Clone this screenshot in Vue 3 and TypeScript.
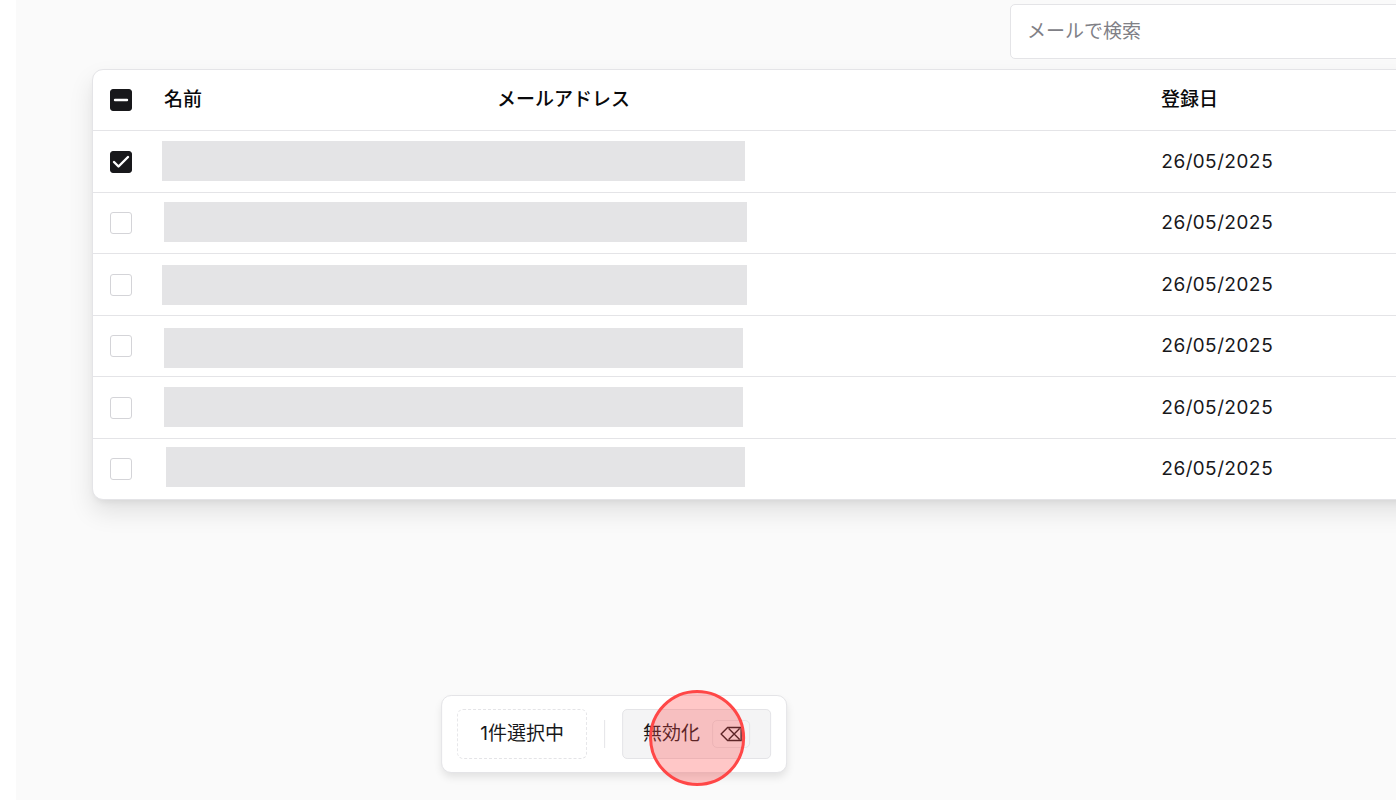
<script setup lang="ts">
import { ref, computed } from 'vue'

interface Mask {
  left: number
  top: number
  width: number
}

interface UserRow {
  id: number
  registered: string
  selected: boolean
  mask: Mask
}

const search = ref('')

const users = ref<UserRow[]>([
  { id: 1, registered: '26/05/2025', selected: true, mask: { left: 14, top: 10, width: 583 } },
  { id: 2, registered: '26/05/2025', selected: false, mask: { left: 16, top: 9, width: 583 } },
  { id: 3, registered: '26/05/2025', selected: false, mask: { left: 14, top: 11, width: 585 } },
  { id: 4, registered: '26/05/2025', selected: false, mask: { left: 16, top: 12, width: 579 } },
  { id: 5, registered: '26/05/2025', selected: false, mask: { left: 16, top: 10, width: 579 } },
  { id: 6, registered: '26/05/2025', selected: false, mask: { left: 18, top: 8, width: 579 } },
])

const selectedCount = computed(() => users.value.filter((u) => u.selected).length)
const allSelected = computed(() => selectedCount.value === users.value.length)
const someSelected = computed(() => selectedCount.value > 0 && !allSelected.value)

function toggleAll() {
  const next = !allSelected.value
  users.value.forEach((u) => (u.selected = next))
}

function maskStyle(mask: Mask) {
  return { left: `${mask.left}px`, top: `${mask.top}px`, width: `${mask.width}px` }
}
</script>

<template>
  <div class="page">
    <main class="content">
      <div class="toolbar">
        <input v-model="search" class="search" type="search" placeholder="メールで検索" aria-label="メールで検索" />
      </div>

      <div class="card">
        <table class="users">
          <colgroup>
            <col class="col-select" />
            <col class="col-name" />
            <col class="col-email" />
            <col class="col-date" />
          </colgroup>
          <thead>
            <tr>
              <th class="select" scope="col">
                <label class="check">
                  <input
                    type="checkbox"
                    aria-label="すべて選択"
                    :checked="allSelected"
                    :indeterminate="someSelected"
                    @change="toggleAll"
                  />
                  <svg v-if="someSelected" viewBox="0 0 22 22" aria-hidden="true">
                    <path d="M5 11h12" />
                  </svg>
                  <svg v-else-if="allSelected" viewBox="0 0 22 22" aria-hidden="true">
                    <path d="M4 11l4.500 4.500L18 6" />
                  </svg>
                </label>
              </th>
              <th scope="col">名前</th>
              <th scope="col">メールアドレス</th>
              <th scope="col">登録日</th>
            </tr>
          </thead>
          <tbody>
            <tr v-for="user in users" :key="user.id">
              <td class="select">
                <label class="check">
                  <input v-model="user.selected" type="checkbox" aria-label="行を選択" />
                  <svg v-if="user.selected" viewBox="0 0 22 22" aria-hidden="true">
                    <path d="M4 11l4.500 4.500L18 6" />
                  </svg>
                </label>
              </td>
              <td class="masked" colspan="2">
                <span class="mask" :style="maskStyle(user.mask)"></span>
              </td>
              <td class="date">{{ user.registered }}</td>
            </tr>
          </tbody>
        </table>
      </div>
    </main>

    <div class="actions" role="toolbar" aria-label="一括操作">
      <span class="count">{{ selectedCount }}件選択中</span>
      <span class="divider"></span>
      <button class="disable" type="button">
        無効化
        <kbd>
          <svg viewBox="0 0 22 16" aria-label="Backspace">
            <path d="M1 8L7.500 1.500H21v13H7.500zM8.500 2.500l11 11M19.500 2.500l-11 11" />
          </svg>
        </kbd>
        <span class="pointer"></span>
      </button>
    </div>
  </div>
</template>

<style>
body {
  background: #fff;
  overflow: hidden;
}
</style>

<style scoped>
.page,
.page * {
  box-sizing: border-box;
}

.page {
  position: relative;
  min-height: 100vh;
  padding-left: 16px;
  overflow: hidden;
  font-family: Inter, 'Noto Sans CJK JP', sans-serif;
  font-size: 19px;
  line-height: 28px;
  color: #18181b;
}

.content {
  min-height: 100vh;
  padding: 4px 0 0 76px;
  background: #fafafa;
}

.toolbar {
  display: flex;
  justify-content: flex-end;
  margin-bottom: 10px;
}

.search {
  flex: none;
  width: 400px;
  height: 55px;
  margin-right: -14px;
  padding: 0 16px;
  border: 1px solid #e4e4e7;
  border-radius: 5px;
  background: #fff;
  color: #18181b;
  font: inherit;
  appearance: none;
  outline: none;
}

.search::placeholder {
  color: #808086;
  opacity: 1;
}

.card {
  margin-right: -40px;
  border: 1px solid #e4e4e7;
  border-radius: 11px;
  background: #fff;
  box-shadow:
    0 12px 24px 0 rgba(0, 0, 0, 0.1),
    0 4px 8px -4px rgba(0, 0, 0, 0.1);
}

.users {
  width: 100%;
  table-layout: fixed;
  border-collapse: separate;
  border-spacing: 0;
}

.col-select {
  width: 55px;
}

.col-name {
  width: 333px;
}

.col-email {
  width: 664px;
}

th,
td {
  height: 61px;
  padding: 0 16px;
  text-align: left;
  vertical-align: middle;
  border-bottom: 1px solid #e4e4e7;
}

tbody tr:nth-child(odd) td {
  height: 62px;
}

tbody tr:last-child td {
  height: 60px;
  border-bottom: 0;
}

th {
  font-weight: 500;
  color: #09090b;
}

.select {
  padding: 0 0 0 17px;
}

.date {
  font-variant-numeric: tabular-nums;
}

.check {
  position: relative;
  display: block;
  width: 22px;
  height: 22px;
}

.check input {
  display: block;
  width: 22px;
  height: 22px;
  margin: 0;
  border: 1px solid #d4d4d8;
  border-radius: 3px;
  background: #fff;
  appearance: none;
}

.check input:checked,
.check input:indeterminate {
  border-color: #18181b;
  background: #18181b;
}

.check svg {
  position: absolute;
  inset: 0;
  fill: none;
  stroke: #fff;
  stroke-width: 2.4;
  stroke-linecap: round;
  stroke-linejoin: round;
  pointer-events: none;
}

.masked {
  position: relative;
}

.mask {
  position: absolute;
  height: 40px;
  background: #e4e4e6;
}

.actions {
  position: absolute;
  bottom: 27px;
  left: 44%;
  display: flex;
  align-items: center;
  gap: 17px;
  padding: 13px 15px;
  border: 1px solid #e4e4e7;
  border-radius: 10px;
  background: #fff;
  box-shadow: 0 5px 8px -1px rgba(0, 0, 0, 0.1);
  transform: translateX(-50%);
  white-space: nowrap;
}

.count {
  height: 50px;
  padding: 10px 22px;
  border: 1px dashed #e4e4e7;
  border-radius: 6px;
}

.divider {
  width: 1px;
  height: 28px;
  background: #e4e4e7;
}

.disable {
  position: relative;
  display: flex;
  align-items: center;
  gap: 12px;
  height: 50px;
  padding: 0 20px;
  border: 1px solid #e4e4e7;
  border-radius: 5px;
  background: #f4f4f5;
  color: #18181b;
  font: inherit;
}

kbd {
  display: flex;
  align-items: center;
  height: 28px;
  padding: 0 7px;
  border: 1px solid #e4e4e7;
  border-radius: 5px;
}

kbd svg {
  display: block;
  width: 22px;
  height: 16px;
  fill: none;
  stroke: #18181b;
  stroke-width: 1.4;
}

.pointer {
  position: absolute;
  top: -20px;
  left: 26px;
  width: 96px;
  height: 96px;
  border: 3px solid #ff4747;
  border-radius: 50%;
  background: rgba(255, 71, 71, 0.3);
  pointer-events: none;
}
</style>
